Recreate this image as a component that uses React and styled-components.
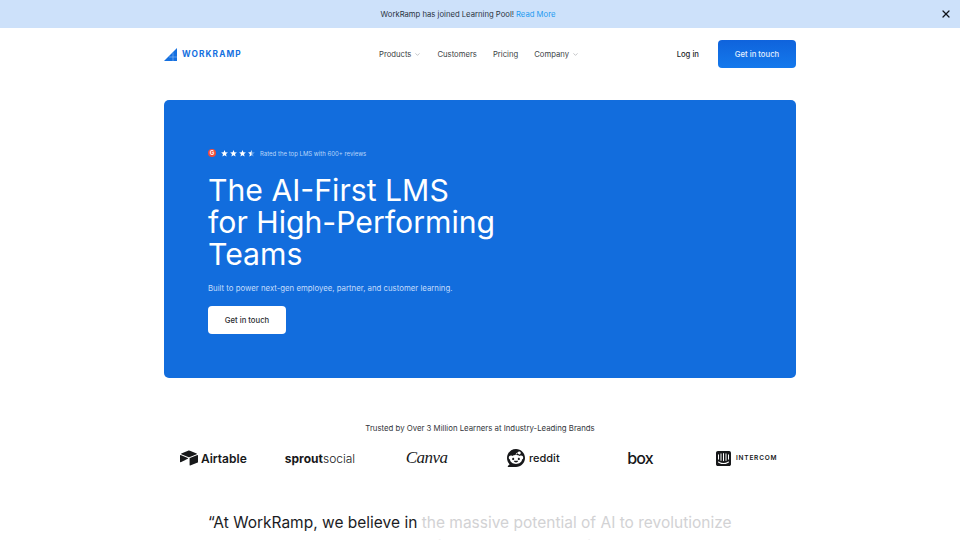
import React from 'react'
import styled, { createGlobalStyle } from 'styled-components'
import { ChevronDown, X } from 'lucide-react'
import { SiAirtable, SiReddit, SiIntercom } from 'react-icons/si'

const GlobalStyle = createGlobalStyle`
html, body {
  margin: 0;
  height: 540px;
  overflow: hidden;
  background: #fff;
  font-family: Inter, "Liberation Sans", sans-serif;
  color: #1c1c1f;
}
`

const Banner = styled.div`
position: relative;
height: 28px;
padding-right: 24px;
box-sizing: border-box;
background: #cde1fa;
display: flex;
align-items: center;
justify-content: center;
font-size: 7.7px;
color: #2a3442;
gap: 2px;
`

const BannerLink = styled.a`
color: #1e9bf0;
`

const Close = styled.button`
position: absolute;
top: 8px;
right: 8px;
width: 12px;
height: 12px;
padding: 0;
border: 0;
background: none;
color: #10141a;
display: flex;
`

const Page = styled.div`
width: 632px;
margin: 0 auto;
`

const Nav = styled.nav`
height: 40px;
padding-top: 12px;
display: flex;
align-items: flex-start;
`

const Logo = styled.div`
display: flex;
flex: 0 0 215px;
align-items: center;
gap: 5px;
height: 28px;
color: #1570e0;
font-size: 8.3px;
font-weight: 700;
letter-spacing: 1.1px;
`

const Links = styled.div`
display: flex;
align-items: center;
gap: 16px;
height: 28px;
`

const NavLink = styled.a`
display: flex;
align-items: center;
gap: 3px;
font-size: 7.7px;
color: #3c3f45;
`

const NavRight = styled.div`
display: flex;
align-items: center;
gap: 19px;
margin-left: auto;
`

const LogIn = styled.a`
font-size: 7.7px;
font-weight: 500;
color: #23262b;
`

const CtaButton = styled.a`
width: 78px;
height: 28px;
border-radius: 4px;
display: flex;
align-items: center;
justify-content: center;
font-size: 7.7px;
font-weight: 500;
background: ${p => (p.$light ? '#fff' : 'linear-gradient(180deg, #0f63dc, #1479ec)')};
color: ${p => (p.$light ? '#2a2c30' : '#e4f0ff')};
`

const Hero = styled.section`
margin-top: 20px;
height: 278px;
box-sizing: border-box;
padding: 48px 44px;
background: #126ddd;
border-radius: 5px;
color: #fff;
`

const Rating = styled.div`
display: flex;
align-items: center;
height: 10px;
font-size: 6px;
color: #b9d6fa;
`

const G2 = styled.span`
width: 8px;
height: 8px;
border-radius: 50%;
background: #ef4c3b;
color: #fff;
font-size: 6px;
font-weight: 700;
line-height: 8px;
text-align: center;
margin-right: 5px;
`

const Stars = styled.svg`
width: 34px;
height: 7px;
margin-right: 5px;
`

const Title = styled.h1`
margin: 16px 0 0;
font-size: 30.2px;
font-weight: 400;
line-height: 32px;
color: #fff;
`

const Sub = styled.p`
margin: 11px 0 11px;
font-size: 7.8px;
line-height: 14px;
color: #c4dcfb;
`

const Trusted = styled.p`
margin: 44px 0 0;
text-align: center;
font-size: 7.8px;
line-height: 12px;
color: #33363b;
`

const Brands = styled.div`
display: grid;
grid-template-columns: repeat(6, 1fr);
margin: 12px -4px 0;
height: 24px;
align-items: center;
justify-items: center;
`

const Brand = styled.div`
display: flex;
align-items: center;
gap: ${p => p.$gap ?? 3}px;
color: #17181a;
font-size: ${p => p.$size || 13}px;
font-weight: ${p => p.$weight || 600};
letter-spacing: ${p => p.$spacing || 0}px;
font-family: ${p => p.$font || 'inherit'};
font-style: ${p => (p.$italic ? 'italic' : 'normal')};
`

const Thin = styled.span`
font-weight: 300;
`

const Quote = styled.blockquote`
margin: 41px 0 0;
padding: 0 44px;
font-size: 15.5px;
line-height: 24px;
color: #1b1c1f;
`

const Faded = styled.span`
color: #d2d2d4;
`

function Star({ x, half }) {
  const d = 'M3.5 0 L4.4 2.3 L6.9 2.5 L5 4.1 L5.6 6.6 L3.5 5.2 L1.4 6.6 L2 4.1 L0.1 2.5 L2.6 2.3 Z'
  return (
    <g transform={`translate(${x} 0)`}>
      <path d={d} fill="#fff" opacity={half ? 0.35 : 1} />
      {half && <path d="M3.5 0 L2.6 2.3 L0.1 2.5 L2 4.1 L1.4 6.6 L3.5 5.2 Z" fill="#fff" />}
    </g>
  )
}

function App() {
  return (
    <>
      <GlobalStyle />
      <Banner>
        <span>WorkRamp has joined Learning Pool!</span>
        <BannerLink>Read More</BannerLink>
        <Close><X size={12} strokeWidth={2.5} /></Close>
      </Banner>
      <Page>
        <Nav>
          <Logo>
            <svg width="13" height="13" viewBox="0 0 13 13">
              <path d="M13 0 V13 H0 Z" fill="#1570e0" />
              <path d="M9 4.5 V13 M5 9 L13 9" stroke="#8fbdf5" strokeWidth="0.6" />
            </svg>
            WORKRAMP
          </Logo>
          <Links>
            <NavLink>Products <ChevronDown size={7} color="#9a9ca0" /></NavLink>
            <NavLink>Customers</NavLink>
            <NavLink>Pricing</NavLink>
            <NavLink>Company <ChevronDown size={7} color="#9a9ca0" /></NavLink>
          </Links>
          <NavRight>
            <LogIn>Log in</LogIn>
            <CtaButton>Get in touch</CtaButton>
          </NavRight>
        </Nav>
        <Hero>
          <Rating>
            <G2>G</G2>
            <Stars viewBox="0 0 34 7">
              <Star x={0} />
              <Star x={9} />
              <Star x={18} />
              <Star x={27} half />
            </Stars>
            Rated the top LMS with 600+ reviews
          </Rating>
          <Title>The AI-First LMS<br />for High-Performing<br />Teams</Title>
          <Sub>Built to power next-gen employee, partner, and customer learning.</Sub>
          <CtaButton $light>Get in touch</CtaButton>
        </Hero>
        <Trusted>Trusted by Over 3 Million Learners at Industry-Leading Brands</Trusted>
        <Brands>
          <Brand $size={12}><SiAirtable size={18} />Airtable</Brand>
          <Brand $size={12} $gap={0} $weight={700}>sprout<Thin>social</Thin></Brand>
          <Brand $size={17} $font='"Liberation Serif", serif' $italic $weight={400} $spacing={-0.5}>Canva</Brand>
          <Brand $size={11} $weight={500} $gap={4}><SiReddit size={18} />reddit</Brand>
          <Brand $size={16} $weight={500} $spacing={-0.8}>box</Brand>
          <Brand $size={6.5} $weight={600} $spacing={0.8} $gap={5}><SiIntercom size={15} />INTERCOM</Brand>
        </Brands>
        <Quote>“At WorkRamp, we believe in <Faded>the massive potential of AI to revolutionize how teams learn, grow and perform at every level of work.”</Faded></Quote>
      </Page>
    </>
  )
}

export default App
